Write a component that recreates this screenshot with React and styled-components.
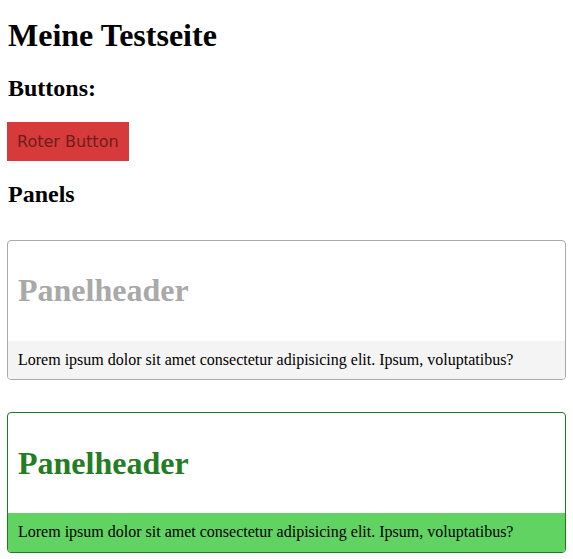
import styled, { createGlobalStyle } from "styled-components";

const GlobalStyle = createGlobalStyle`
  body {
    margin: 0;
    padding: 0 7px;
    font-family: "Liberation Serif", "Times New Roman", serif;
    font-size: 16px;
    color: #000;
    background: #fff;
  }
`;

const Title = styled.h1`
  font-size: 32px;
  font-weight: bold;
  margin: 17px 1px 21px;
`;

const SectionTitle = styled.h2`
  font-size: 24px;
  font-weight: bold;
  margin: 20px 1px;
`;

const RedButton = styled.button`
  display: block;
  margin: 20px 0;
  padding: 10px 10px;
  border: none;
  border-radius: 0;
  background: #d63a3b;
  color: #6f1d1d;
  font-family: "DejaVu Sans", Verdana, sans-serif;
  font-size: 16px;
  cursor: pointer;
`;

const themes = {
  default: { border: "#aaaaaa", title: "#a9a9a9", footer: "#f4f4f4" },
  success: { border: "#1f7a1f", title: "#247d24", footer: "#60d363" },
};

const PanelBox = styled.div`
  margin: 32px 0;
  border: 1px solid ${(props) => themes[props.variant].border};
  border-radius: 4px;
  overflow: hidden;
`;

const PanelHeader = styled.div`
  padding: 10px;
`;

const PanelTitle = styled.h1`
  margin: 21.44px 0;
  font-size: 32px;
  font-weight: bold;
  color: ${(props) => themes[props.variant].title};
`;

const PanelFooter = styled.div`
  padding: 10px 10px 10.5px;
  background: ${(props) => themes[props.variant].footer};
`;

const LOREM =
  "Lorem ipsum dolor sit amet consectetur adipisicing elit. Ipsum, voluptatibus?";

function Panel({ variant = "default", title, children }) {
  return (
    <PanelBox variant={variant}>
      <PanelHeader>
        <PanelTitle variant={variant}>{title}</PanelTitle>
      </PanelHeader>
      <PanelFooter variant={variant}>{children}</PanelFooter>
    </PanelBox>
  );
}

export default function App() {
  return (
    <>
      <GlobalStyle />
      <Title>Meine Testseite</Title>
      <SectionTitle>Buttons:</SectionTitle>
      <RedButton>Roter Button</RedButton>
      <SectionTitle>Panels</SectionTitle>
      <Panel title="Panelheader">{LOREM}</Panel>
      <Panel variant="success" title="Panelheader">
        {LOREM}
      </Panel>
    </>
  );
}
